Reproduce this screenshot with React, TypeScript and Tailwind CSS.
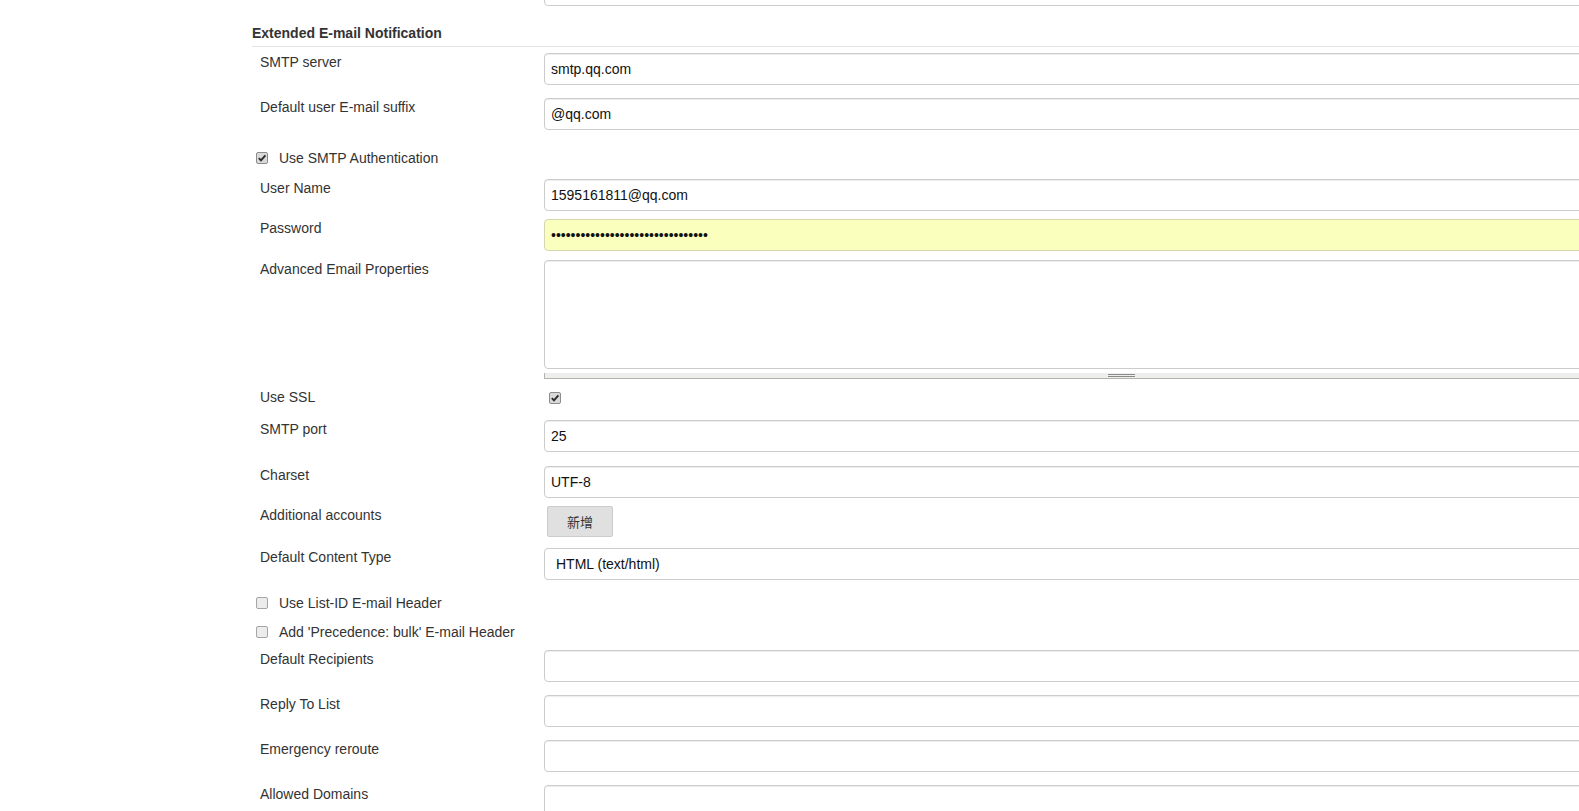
import React from 'react'

function Check({ checked }: { checked?: boolean }) {
  return (
    <span
      className={
        checked
          ? 'flex h-[12px] w-[12px] shrink-0 items-center justify-center rounded-[2px] border border-[#8c8c8c] bg-[#d9d9d9]'
          : 'flex h-[12px] w-[12px] shrink-0 items-center justify-center rounded-[2px] border border-[#a6a6a6] bg-[#ececec]'
      }
    >
      {checked && (
        <svg width="10" height="10" viewBox="0 0 10 10">
          <path d="M1.8 5.2 L4 7.4 L8.4 2.4" fill="none" stroke="#2b2b2b" strokeWidth="1.9" />
        </svg>
      )}
    </span>
  )
}

function Text({ value = '' }: { value?: string }) {
  return (
    <input
      readOnly
      value={value}
      className="h-[32px] w-[1154px] shrink-0 rounded-[4px] border border-[#cccccc] bg-white px-[6px] text-[14px] text-[#111] shadow-[inset_0_1px_1px_rgba(0,0,0,0.075)] outline-none"
    />
  )
}

function Row({ label, className, children }: { label: string; className: string; children: React.ReactNode }) {
  return (
    <div className={`flex items-start ${className}`}>
      <div className="w-[292px] shrink-0 pl-[8px] leading-[18px] text-[#333]">{label}</div>
      {children}
    </div>
  )
}

function CheckRow({ label, checked, className }: { label: string; checked?: boolean; className: string }) {
  return (
    <div className={`flex h-[18px] items-center pl-[4px] ${className}`}>
      <Check checked={checked} />
      <span className="ml-[11px] leading-[18px] text-[#333]">{label}</span>
    </div>
  )
}

export default function App() {
  return (
    <div className="h-[811px] w-full overflow-hidden bg-white font-['Liberation_Sans',Arial,sans-serif] text-[14px]">
      <div className="w-[1698px] pl-[252px]">
        {/* previous section, cut off at the top */}
        <div className="flex h-[6px] items-end overflow-hidden pl-[292px]">
          <Text />
        </div>

        <div className="mt-[17px] border-b border-[#e2e2e2] pb-[3px] font-bold leading-[20px] text-[#333]">
          Extended E-mail Notification
        </div>

        <Row label="SMTP server" className="mt-[6px]">
          <Text value="smtp.qq.com" />
        </Row>
        <Row label="Default user E-mail suffix" className="mt-[13px]">
          <Text value="@qq.com" />
        </Row>

        <CheckRow label="Use SMTP Authentication" checked className="mt-[19px]" />

        <Row label="User Name" className="mt-[12px]">
          <Text value="1595161811@qq.com" />
        </Row>
        <Row label="Password" className="mt-[8px]">
          <input
            readOnly
            type="password"
            value="12345678901234567890123456789012"
            className="h-[32px] w-[1154px] shrink-0 rounded-[4px] border border-[#d6d6b0] bg-[#faffbd] px-[6px] text-[14px] text-[#111] outline-none"
          />
        </Row>
        <Row label="Advanced Email Properties" className="mt-[9px]">
          <div className="flex w-[1154px] shrink-0 flex-col">
            <textarea
              readOnly
              className="h-[109px] w-full resize-none rounded-[4px] border border-[#cccccc] bg-white shadow-[inset_0_1px_1px_rgba(0,0,0,0.075)] outline-none"
            />
            <div className="mt-[4px] flex h-[6px] items-center justify-center border-b border-l border-[#b4b4aa] bg-[#eeeeee]">
              <div className="h-[3px] w-[27px] border-y border-[#8a8a8a]" />
            </div>
          </div>
        </Row>

        <div className="mt-[9px] flex h-[18px] items-center">
          <div className="w-[292px] shrink-0 pl-[8px] leading-[18px] text-[#333]">Use SSL</div>
          <div className="pl-[5px] pt-[2px]">
            <Check checked />
          </div>
        </div>
        <Row label="SMTP port" className="mt-[14px]">
          <Text value="25" />
        </Row>
        <Row label="Charset" className="mt-[14px]">
          <Text value="UTF-8" />
        </Row>
        <Row label="Additional accounts" className="mt-[8px]">
          <button className="ml-[3px] flex h-[31px] w-[66px] items-center justify-center rounded-[2px] border border-[#cccccc] bg-[#e0e0e0] font-['Noto_Sans_CJK_SC',sans-serif] text-[13px] text-[#333]">
            新增
          </button>
        </Row>
        <Row label="Default Content Type" className="mt-[11px]">
          <div className="flex h-[32px] w-[1154px] shrink-0 items-center rounded-[4px] border border-[#cccccc] bg-white pl-[11px] text-[#111]">
            HTML (text/html)
          </div>
        </Row>

        <CheckRow label="Use List-ID E-mail Header" className="mt-[14px]" />
        <CheckRow label="Add 'Precedence: bulk' E-mail Header" className="mt-[11px]" />

        <Row label="Default Recipients" className="mt-[9px]">
          <Text />
        </Row>
        <Row label="Reply To List" className="mt-[13px]">
          <Text />
        </Row>
        <Row label="Emergency reroute" className="mt-[13px]">
          <Text />
        </Row>
        <Row label="Allowed Domains" className="mt-[13px]">
          <Text />
        </Row>
      </div>
    </div>
  )
}
